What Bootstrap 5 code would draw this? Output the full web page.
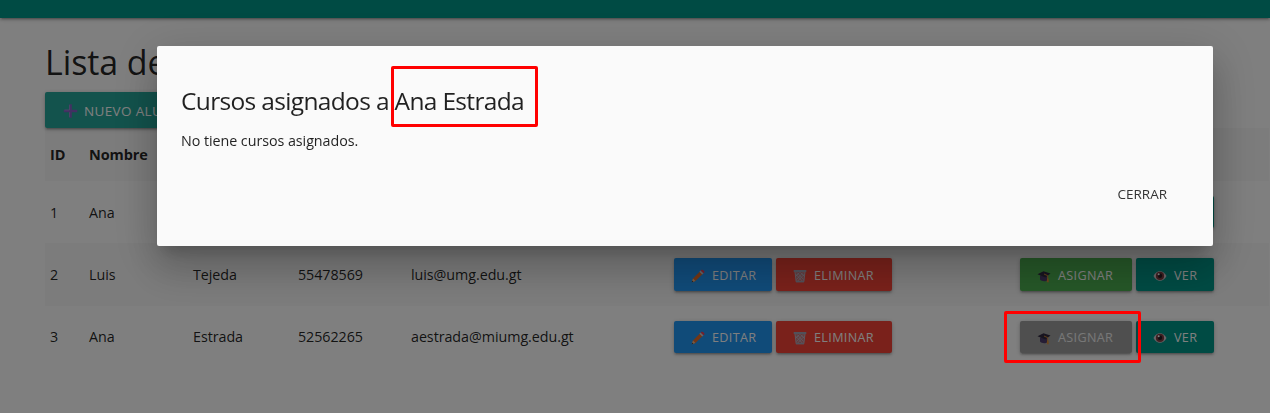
<!DOCTYPE html>
<html lang="es">
<head>
<meta charset="utf-8">
<meta name="viewport" content="width=device-width, initial-scale=1">
<title>Lista de alumnos</title>
<link rel="stylesheet" href="https://cdn.jsdelivr.net/npm/bootstrap@5.3.0/dist/css/bootstrap.min.css">
<style>
  body { font-family: "Open Sans", "Noto Sans", sans-serif; font-size: 14.3px; line-height: 1.5; letter-spacing: -.05px; color: rgba(0,0,0,.87); height: 413px; overflow: hidden; }
  .topbar { height: 18px; background: #009688; box-shadow: 0 2px 2px rgba(0,0,0,.14), 0 3px 1px -2px rgba(0,0,0,.12), 0 1px 5px rgba(0,0,0,.2); }
  .page { margin: 0 1px 0 45px; }
  .page-title { font-size: 34px; font-weight: 400; line-height: 44px; margin: 22px 0 8px; letter-spacing: -.1px; }
  .btn-mat { --bs-btn-color: #fff; --bs-btn-border-width: 0; --bs-btn-border-radius: 2px; --bs-btn-padding-y: 0; --bs-btn-padding-x: 17px; --bs-btn-font-size: 12.6px; height: 32.4px; padding-top: 2px; line-height: 30px; letter-spacing: .35px; display: inline-flex; align-items: center; text-transform: uppercase; white-space: nowrap; box-shadow: 0 2px 2px rgba(0,0,0,.14), 0 3px 1px -2px rgba(0,0,0,.12), 0 1px 5px rgba(0,0,0,.2); }
  .btn-mat svg { flex: none; margin-right: 7px; }
  .btn-new { --bs-btn-font-size: 13.5px; --bs-btn-padding-x: 16px; height: 36px; background: #26a69a; width: 170px; }
  .btn-new svg { margin-left: 2px; margin-right: 6px; }
  .b-edit { background: #2196f3; width: 98px; }
  .b-del { background: #f44336; width: 116px; }
  .b-add { background: #4caf50; width: 112px; }
  .b-see { background: #009688; width: 78px; }
  .b-off { background: #9f9f9f; color: #efefef; }
  .grid-list { table-layout: fixed; --bs-table-bg: transparent; --bs-table-color: inherit; }
  .grid-list > :not(caption) > * > * { padding: 15px 5px; height: 62.4px; border: 0; vertical-align: middle; line-height: 22px; white-space: nowrap; }
  .grid-list > tbody > tr > td:not(.acts) { padding-top: 16px; padding-bottom: 15px; }
  .grid-list thead th { height: 53px; font-size: 14.5px; letter-spacing: -.1px; }
  .grid-list .band { background: #f8f8f8; }
  .modal-backdrop { --bs-backdrop-opacity: .5; }
  .modal-dialog.dlg { width: 1056px; max-width: none; margin: 46px 0 0 157px; }
  .dlg .modal-content { height: 200px; background: #fafafa; border: 0; border-radius: 2px; color: rgba(0,0,0,.87); box-shadow: 0 24px 38px 3px rgba(0,0,0,.14), 0 9px 46px 8px rgba(0,0,0,.12), 0 11px 15px -7px rgba(0,0,0,.2); }
  .dlg .modal-body { padding: 38px 24px 0; }
  .dlg h4 { font-size: 24.5px; font-weight: 400; line-height: 34px; margin: 0 0 12px; letter-spacing: -.66px; }
  .dlg .modal-footer { height: 56px; padding: 0 46px 0 0; border: 0; margin-bottom: 24px; }
  .btn-flat { font-size: 13.5px; letter-spacing: -.02px; line-height: 36px; padding: 0; margin: 0; border: 0; color: #343434; border-radius: 2px; }
  .callout-frame { position: absolute; z-index: 1060; border: 3px solid #f00; border-radius: 2px; pointer-events: none; }
  .frame-name { left: 391px; top: 66px; width: 147px; height: 61px; }
  .frame-btn { left: 1004px; top: 311px; width: 137px; height: 52px; }
</style>
</head>
<body>
<svg width="0" height="0" class="position-absolute">
  <symbol id="i-pen" viewBox="0 0 14 14"><path d="M9.4 1.9 12.1 4.6 4.4 12 .8 13.2 2 9.5z" fill="#e66d2b"/><path d="M2 9.5 4.4 12 .8 13.2z" fill="#edba8d"/><path d="m1.2 11.8 1.1 1-1.6.5z" fill="#333"/><path d="m8.4 2.8 1.3-1.3 2.8 2.8-1.3 1.3z" fill="#c6ccd8"/><path d="m9.7 1.5.8-.7c1.2-.8 3.6 1.4 2.8 2.7l-.8.8z" fill="#ee3f57"/></symbol>
  <symbol id="i-bin" viewBox="0 0 14 14"><path d="m1.6 2 1.3 11h8.2L12.4 2z" fill="#a3a2b5" fill-opacity=".55"/><path d="m2 3 1.2 9.7h7.6L12 3M2.5 5l6.8 7M4 3.5l6.5 7M7.5 3.5l4 4M11.5 5l-6.8 7M10 3.5l-6.5 7M6.5 3.5l-4 4" fill="none" stroke="#b9bac9" stroke-width=".8"/><path d="M.7 1h12.6v2H.7z" fill="#a3a2b5"/><path d="M3 12h8v1.3H3z" fill="#a3a2b5"/></symbol>
  <symbol id="i-cap" viewBox="0 0 14 14"><path d="M3 6.5v4c1.5 2 6 2.3 7.6.4V6.5z" fill="#4b3b6a"/><path d="M.5 5.2 6.5 2.2 13.5 4.6 8.3 8.5z" fill="#30283f"/><path d="m7 5 3.7 1.7v5.6" fill="none" stroke="#d88b34" stroke-width=".9"/><path d="M10 9.5h1.5l.3 3.8H9.8z" fill="#d88b34"/></symbol>
  <symbol id="i-eye" viewBox="0 0 14 14"><path d="M.5 7C3.2 .6 10.6 .6 13.5 7 10.7 13.4 3.2 13.4 .5 7z" fill="#d4c6ce"/><circle cx="7" cy="6.9" r="4.1" fill="#7c3d40"/><circle cx="7" cy="6.8" r="2.2" fill="#241b22"/><circle cx="5.7" cy="5.2" r="1" fill="#fff"/></symbol>
  <symbol id="i-plus" viewBox="0 0 14 14"><path d="M5.7.3h2.6v5.4h5.4v2.6H8.3v5.4H5.7V8.3H.3V5.7h5.4z" fill="#8561c5"/><path d="M6 .8v5.200h-5M6 8.200v5" fill="none" stroke="#b094dd" stroke-width=".6"/></symbol>
</svg>

<nav class="topbar"></nav>
<main class="page">
  <h1 class="page-title">Lista de</h1>
  <button class="btn btn-mat btn-new"><svg width="15" height="14"><use href="#i-plus"/></svg>Nuevo alumno</button>
  <table class="table grid-list mb-0">
    <colgroup><col style="width:39px"><col style="width:104px"><col style="width:105px"><col style="width:113px"><col style="width:263px"><col style="width:346px"><col></colgroup>
    <thead><tr class="band"><th>ID</th><th>Nombre</th><th></th><th></th><th></th><th></th><th></th></tr></thead>
    <tbody id="rows"></tbody>
  </table>
</main>

<div class="modal-backdrop show"></div>
<div class="modal show d-block" tabindex="-1" role="dialog">
  <div class="modal-dialog dlg">
    <div class="modal-content">
      <div class="modal-body">
        <h4>Cursos asignados a Ana Estrada</h4>
        <p class="mb-0">No tiene cursos asignados.</p>
      </div>
      <div class="modal-footer"><button class="btn btn-flat">CERRAR</button></div>
    </div>
  </div>
</div>
<div class="callout-frame frame-name"></div>
<div class="callout-frame frame-btn"></div>

<script src="https://cdn.jsdelivr.net/npm/bootstrap@5.3.0/dist/js/bootstrap.bundle.min.js"></script>
<script>
  const students = [
    [1, 'Ana', '', '', '', true],
    [2, 'Luis', 'Tejeda', '55478569', 'luis@umg.edu.gt', true],
    [3, 'Ana', 'Estrada', '52562265', 'aestrada@miumg.edu.gt', false]
  ];
  const button = (cls, icon, label) => `<button class="btn btn-mat ${cls}"><svg width="14" height="14"><use href="#i-${icon}"/></svg>${label}</button>`;
  document.getElementById('rows').innerHTML = students.map(([id, name, last, phone, mail, open], i) =>
    `<tr class="${i % 2 ? 'band' : ''}"><td>${id}</td><td>${name}</td><td>${last}</td><td>${phone}</td><td>${mail}</td>` +
    `<td class="acts"><div class="d-flex gap-1">${button('b-edit', 'pen', 'Editar')}${button('b-del', 'bin', 'Eliminar')}</div></td>` +
    `<td class="acts"><div class="d-flex gap-1">${button(open ? 'b-add' : 'b-add b-off', 'cap', 'Asignar')}${button('b-see', 'eye', 'Ver')}</div></td></tr>`).join('');
</script>
</body>
</html>
